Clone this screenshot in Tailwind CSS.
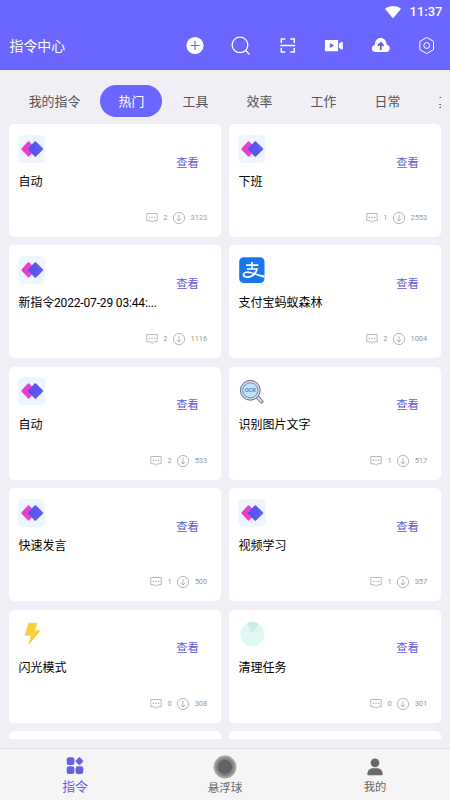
<!DOCTYPE html>
<html lang="zh-CN">
<head>
<meta charset="utf-8">
<meta name="viewport" content="width=device-width, initial-scale=1">
<title>指令中心</title>
<script src="https://cdn.jsdelivr.net/npm/@tailwindcss/browser@4"></script>
</head>
<body class="bg-[#f0eff5] font-['Roboto','Noto_Sans_CJK_SC',sans-serif]">
<svg class="absolute w-0 h-0">
  <defs>
    <linearGradient id="pink" x1="0" y1="0" x2="1" y2="0"><stop offset="0" stop-color="#f035cc"/><stop offset="1" stop-color="#d850d8"/></linearGradient>
    <linearGradient id="blue" x1="0" y1="0" x2="1" y2="0"><stop offset="0" stop-color="#5d4de4"/><stop offset="1" stop-color="#5a62f8"/></linearGradient>
  </defs>
  <symbol id="app" viewBox="0 0 28 28">
    <rect x=".3" y=".3" width="27.2" height="27.6" rx="4.5" fill="#eff5fd"/>
    <path d="M11.300 6.500L18 14l-6.700 7.300a1 1 0 0 1-1.400 0L3.700 14.700a1 1 0 0 1 0-1.400l6.200-6.800a1 1 0 0 1 1.400 0z" fill="url(#pink)"/>
    <path d="M18 6.500l6.900 6.800a1 1 0 0 1 0 1.400l-6.900 6.800a1 1 0 0 1-1.400 0l-6.300-6.800a1 1 0 0 1 0-1.400l6.300-6.800a1 1 0 0 1 1.400 0z" fill="url(#blue)"/>
  </symbol>
  <symbol id="alipay" viewBox="0 0 28 28">
    <rect x="1.200" y="1.200" width="25.300" height="25.800" rx="4.500" fill="#1a76ec"/>
    <g fill="none" stroke="#fff" stroke-width="1.700">
      <path d="M8 9.100h12.300M14 6v6.800M8.800 13h10.300c-.8 3.200-3.200 6-6 7.200-3 1.300-7.500 1.200-7.700-1.300-.2-2.400 3.600-3.400 7.200-2.200"/>
    </g>
    <path d="M11.500 15.800c5 1 10 3 15 3.500v2.600c-5-1.200-9.500-3.400-14.500-5z" fill="#fff"/>
  </symbol>
  <symbol id="ocr" viewBox="0 0 28 28">
    <path d="M18.800 19.200l4.600 5.300" stroke="#6b6f8e" stroke-width="4" stroke-linecap="round"/>
    <path d="M19.600 20.200l3.700 4.200" stroke="#f4d2c2" stroke-width="2.200" stroke-linecap="round"/>
    <circle cx="12.300" cy="13.300" r="9.900" fill="#d5daee" stroke="#626988" stroke-width="1"/>
    <circle cx="12.300" cy="13.300" r="7.500" fill="#bfe4fb" stroke="#6f7fa8" stroke-width=".9"/>
    <text x="12.300" y="15.300" text-anchor="middle" font-size="5.500" font-weight="500" fill="#4677a8" font-family="Roboto">OCR</text>
  </symbol>
  <symbol id="flash" viewBox="0 0 28 28">
    <path d="M10.600 2.800h8.800L17 10.200h6L10.200 25.500l2.600-9.700H6.500z" fill="#f8d03e"/>
  </symbol>
  <symbol id="clean" viewBox="0 0 28 28">
    <circle cx="14.300" cy="14" r="12" fill="#e0f8f3"/>
    <path d="M14.300 13L9 3.200a12 12 0 0 1 12 .7z" fill="#c8eee7"/>
  </symbol>
  <symbol id="msg" viewBox="0 0 12 12">
    <path d="M.8 1.500h10.400v7.300H7.700L6 10.400 4.500 8.800H.8z" fill="none" stroke="#a8a8a8" stroke-width=".8"/>
    <path d="M2.800 5.300h1.300M5.400 5.300h1.300M8 5.300h1.300" stroke="#999" stroke-width="1"/>
  </symbol>
  <symbol id="down" viewBox="0 0 12 12">
    <g fill="none" stroke="#a0a0a0" stroke-width=".75"><circle cx="6" cy="6" r="5.600"/><path d="M6 2.800v6M3.800 6.800L6 9l2.200-2.200"/></g>
  </symbol>
</svg>

<div class="w-[450px] h-[800px] flex flex-col overflow-hidden">
  <header class="h-[69.500px] shrink-0 bg-[#6a66ff] text-white flex flex-col">
    <div class="h-[23px] flex items-center justify-end pr-[7.500px] gap-[8.500px]">
      <svg class="w-4 h-3.5" viewBox="0 0 16 14"><path d="M0 3.700C4.500.2 11.500.2 16 3.700L8 13.500z" fill="#fff"/></svg>
      <span class="text-[13px] leading-[23px] font-medium">11:37</span>
    </div>
    <div class="h-[46.500px] flex items-center justify-between pl-[9.500px] pr-[13px]">
      <h1 class="text-[13.900px] leading-5">指令中心</h1>
      <div class="flex items-center gap-[26.500px]">
        <svg class="w-5 h-5" viewBox="0 0 20 20"><circle cx="10" cy="9.500" r="8.600" fill="#fff"/><path d="M10 5v9M5.500 9.500h9" stroke="#6a66ff" stroke-width="1.200"/></svg>
        <svg class="w-5 h-5" viewBox="0 0 20 20" fill="none" stroke="#fff" stroke-width="1.300" stroke-linecap="round"><circle cx="9" cy="8.900" r="7.800"/><path d="M14.800 14.500l3.400 3.600"/></svg>
        <svg class="w-5 h-5" viewBox="0 0 20 20" fill="none" stroke="#fff" stroke-width="1.500"><path d="M7.300 3h-4v4M12.300 3h4v4M7.300 16h-4v-4M12.300 16h4v-4M2.400 9.500h14.800"/></svg>
        <svg class="w-5 h-5" viewBox="0 0 20 20" fill="#fff"><path fill-rule="evenodd" d="M1.500 4h12a.6.6 0 0 1 .6.600v10a.6.6 0 0 1-.6.600h-12a.6.600 0 0 1-.6-.600v-10a.6.6 0 0 1 .6-.6zm4.300 2.900v5.200L10.200 9.500z"/><path d="M14.900 7.700l2.300-1.700a1 1 0 0 1 1.600.8v5.700a1 1 0 0 1-1.600.8l-2.300-1.700z"/></svg>
        <svg class="w-5 h-5" viewBox="0 0 20 20"><path d="M4 16a3.600 3.600 0 0 1-.2-7.100C4 4.500 6.500 1.900 9.700 1.900s5.800 2.500 6 6.800A3.700 3.700 0 0 1 15.500 16z" fill="#fff"/><path d="M9.800 14V7.800M6.900 9.900l2.900-3 2.900 3" fill="none" stroke="#5c57d8" stroke-width="1.700"/></svg>
        <svg class="w-5 h-5" viewBox="0 0 20 20" fill="none" stroke="#fff" stroke-width="1" stroke-linejoin="round"><path d="M9.200 1.800L2.900 5.300v8.400l6.300 3.600a1 1 0 0 0 1 0l6.300-3.600V5.300l-6.300-3.500a1 1 0 0 0-1 0z"/><circle cx="9.700" cy="9.500" r="2.900"/></svg>
      </div>
    </div>
  </header>

  <nav class="h-[54.500px] shrink-0 pl-[9.500px] mr-[9px] pt-[9px] flex items-center overflow-hidden text-[12.900px] text-[#555] whitespace-nowrap">
    <span class="w-[90px] shrink-0 text-center">我的指令</span>
    <span class="w-[62px] h-8 shrink-0 rounded-full bg-[#6a66ff] text-white flex items-center justify-center pl-[2px]">热门</span>
    <span class="w-[66px] shrink-0 pl-[2px] text-center">工具</span>
    <span class="w-16 shrink-0 text-center">效率</span>
    <span class="w-16 shrink-0 text-center">工作</span>
    <span class="w-16 shrink-0 text-center">日常</span>
    <span class="w-16 shrink-0 text-center">其他</span>
  </nav>

  <main id="list" class="h-[615px] shrink-0 overflow-hidden grid grid-cols-2 content-start gap-x-[8.500px] gap-y-[8.800px] pl-[9.300px] pr-[9.200px]"></main>

  <footer class="mt-auto h-[52.500px] shrink-0 border-t border-[#e4e4e6] bg-[#f5f5f6] grid grid-cols-3 text-center text-[#666]">
    <div class="flex flex-col items-center pt-[8px] text-[#675fe0]">
      <svg class="w-[18px] h-[18px]" viewBox="0 0 18 18" fill="currentColor"><rect x=".7" y=".3" width="7.700" height="7.700" rx="2.300"/><path d="M12.700.9a1 1 0 0 1 1.400 0l2.500 2.500a1 1 0 0 1 0 1.400l-2.500 2.500a1 1 0 0 1-1.400 0l-2.500-2.500a1 1 0 0 1 0-1.400z" stroke="currentColor" stroke-width=".8"/><rect x=".7" y="9.300" width="7.700" height="7.700" rx="2.300"/><rect x="9.600" y="9.300" width="7.700" height="7.700" rx="2.300"/></svg>
      <span class="text-[12.800px] leading-5 mt-[2px]">指令</span>
    </div>
    <div class="flex flex-col items-center pt-[6px]">
      <svg class="w-6 h-6" viewBox="0 0 24 24"><circle cx="12" cy="12" r="11.400" fill="#a3a3a3"/><circle cx="12" cy="12" r="9.400" fill="#858585"/><circle cx="12" cy="12" r="7.200" fill="#626262"/></svg>
      <span class="text-[11.500px] leading-4 mt-px">悬浮球</span>
    </div>
    <div class="flex flex-col items-center pt-[9px]">
      <svg class="w-[18px] h-[18px]" viewBox="0 0 18 18" fill="#696969"><circle cx="9" cy="4.800" r="4.400"/><path d="M1.300 16.500c0-4.200 2.500-6.300 5.500-6.300h4.400c3 0 5.500 2.100 5.500 6.300q0 .7-.7.700H2q-.7 0-.7-.7z"/></svg>
      <span class="text-[11.300px] leading-4 mt-1">我的</span>
    </div>
  </footer>
</div>

<script>
const items = [
  ['app', '自动', 2, 3123], ['app', '下班', 1, 2553],
  ['app', '新指令2022-07-29 03:44:...', 2, 1116], ['alipay', '支付宝蚂蚁森林', 2, 1004],
  ['app', '自动', 2, 533], ['ocr', '识别图片文字', 1, 517],
  ['app', '快速发言', 1, 500], ['app', '视频学习', 1, 357],
  ['flash', '闪光模式', 0, 308], ['clean', '清理任务', 0, 301],
  null, null
];
document.getElementById('list').innerHTML = items.map(it => it ? `
  <article class="h-[112.700px] bg-white rounded-[5px] pl-[9.200px] pr-[13.500px] pt-[10.500px] pb-[12.900px] flex flex-col">
    <div class="flex justify-between">
      <svg class="w-7 h-7"><use href="#${it[0]}"/></svg>
      <a class="text-[11.300px] leading-4 text-[#6259d6] mt-[21px] mr-[8.500px] -mb-[18px]">查看</a>
    </div>
    <h2 class="text-[12px] leading-4 text-black mt-[11.300px] whitespace-nowrap ${it[1].length > 12 ? 'tracking-[-0.160px]' : ''}">${it[1]}</h2>
    <div class="mt-auto flex items-center justify-end text-[7.500px] leading-3 text-[#999]">
      <svg class="w-3 h-3"><use href="#msg"/></svg>
      <span class="ml-[5px]">${it[2]}</span>
      <svg class="w-3 h-3 ml-[5.500px]"><use href="#down"/></svg>
      <span class="ml-[5.500px]">${it[3]}</span>
    </div>
  </article>` : `<article class="h-[112.700px] bg-white rounded-[5px]"></article>`).join('');
</script>
</body>
</html>
